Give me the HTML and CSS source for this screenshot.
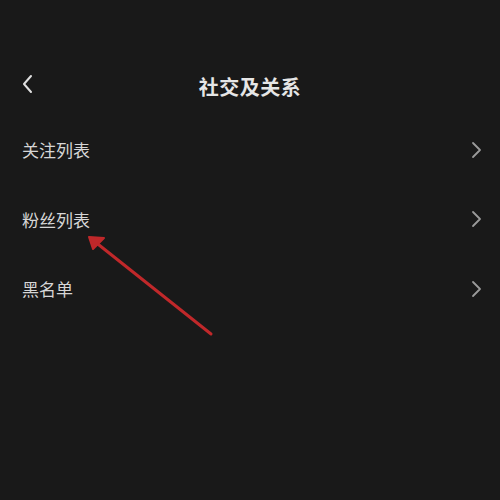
FILE: index.html
```html
<!DOCTYPE html>
<html lang="zh">
<head>
<meta charset="utf-8">
<link rel="stylesheet" href="styles.css">
</head>
<body>
<div class="screen">
  <header class="header">
    <svg class="back" width="14" height="20" viewBox="0 0 14 20"><path d="M10 2 L3 10 L10 18" fill="none" stroke="#e0e0e0" stroke-width="2" stroke-linecap="round" stroke-linejoin="round"/></svg>
    <h1 class="title">社交及关系</h1>
  </header>
  <ul class="list">
    <li class="row"><span class="label">关注列表</span><svg class="chev" width="12" height="18" viewBox="0 0 12 18"><path d="M3 2 L10 9 L3 16" fill="none" stroke="#9a9a9a" stroke-width="1.8" stroke-linecap="round" stroke-linejoin="round"/></svg></li>
    <li class="row"><span class="label">粉丝列表</span><svg class="chev" width="12" height="18" viewBox="0 0 12 18"><path d="M3 2 L10 9 L3 16" fill="none" stroke="#9a9a9a" stroke-width="1.8" stroke-linecap="round" stroke-linejoin="round"/></svg></li>
    <li class="row"><span class="label">黑名单</span><svg class="chev" width="12" height="18" viewBox="0 0 12 18"><path d="M3 2 L10 9 L3 16" fill="none" stroke="#9a9a9a" stroke-width="1.8" stroke-linecap="round" stroke-linejoin="round"/></svg></li>
  </ul>
  <svg class="annot" width="500" height="500" viewBox="0 0 500 500">
    <line x1="211" y1="334" x2="94" y2="241" stroke="#c0282a" stroke-width="3" stroke-linecap="round"/>
    <path d="M89 237 L104 238 L93 249 Z" fill="#c0282a" stroke="#c0282a" stroke-width="2" stroke-linejoin="round"/>
  </svg>
</div>
</body>
</html>
```
FILE: styles.css
```css
html, body {
  margin: 0;
  padding: 0;
  background: #191919;
}
.screen {
  position: relative;
  width: 500px;
  height: 500px;
  background: #191919;
  font-family: "Noto Sans CJK SC", "Noto Sans", sans-serif;
  overflow: hidden;
}
.header {
  margin-top: 56px;
  height: 60px;
  display: flex;
  align-items: center;
  justify-content: center;
  position: relative;
}
.back {
  position: absolute;
  left: 21px;
  top: 18px;
}
.title {
  margin: 0;
  font-size: 20px;
  font-weight: 700;
  color: #e6e6e6;
  letter-spacing: 0.5px;
}
.list {
  list-style: none;
  margin: 0;
  padding: 0;
}
.row {
  height: 69.5px;
  display: flex;
  align-items: center;
  justify-content: space-between;
  padding: 0 18px 0 22px;
}
.label {
  font-size: 17px;
  color: #d6d6d6;
  margin-top: -2px;
}
.chev {
  margin-top: -2px;
}
.annot {
  position: absolute;
  left: 0;
  top: 0;
  pointer-events: none;
}
```
